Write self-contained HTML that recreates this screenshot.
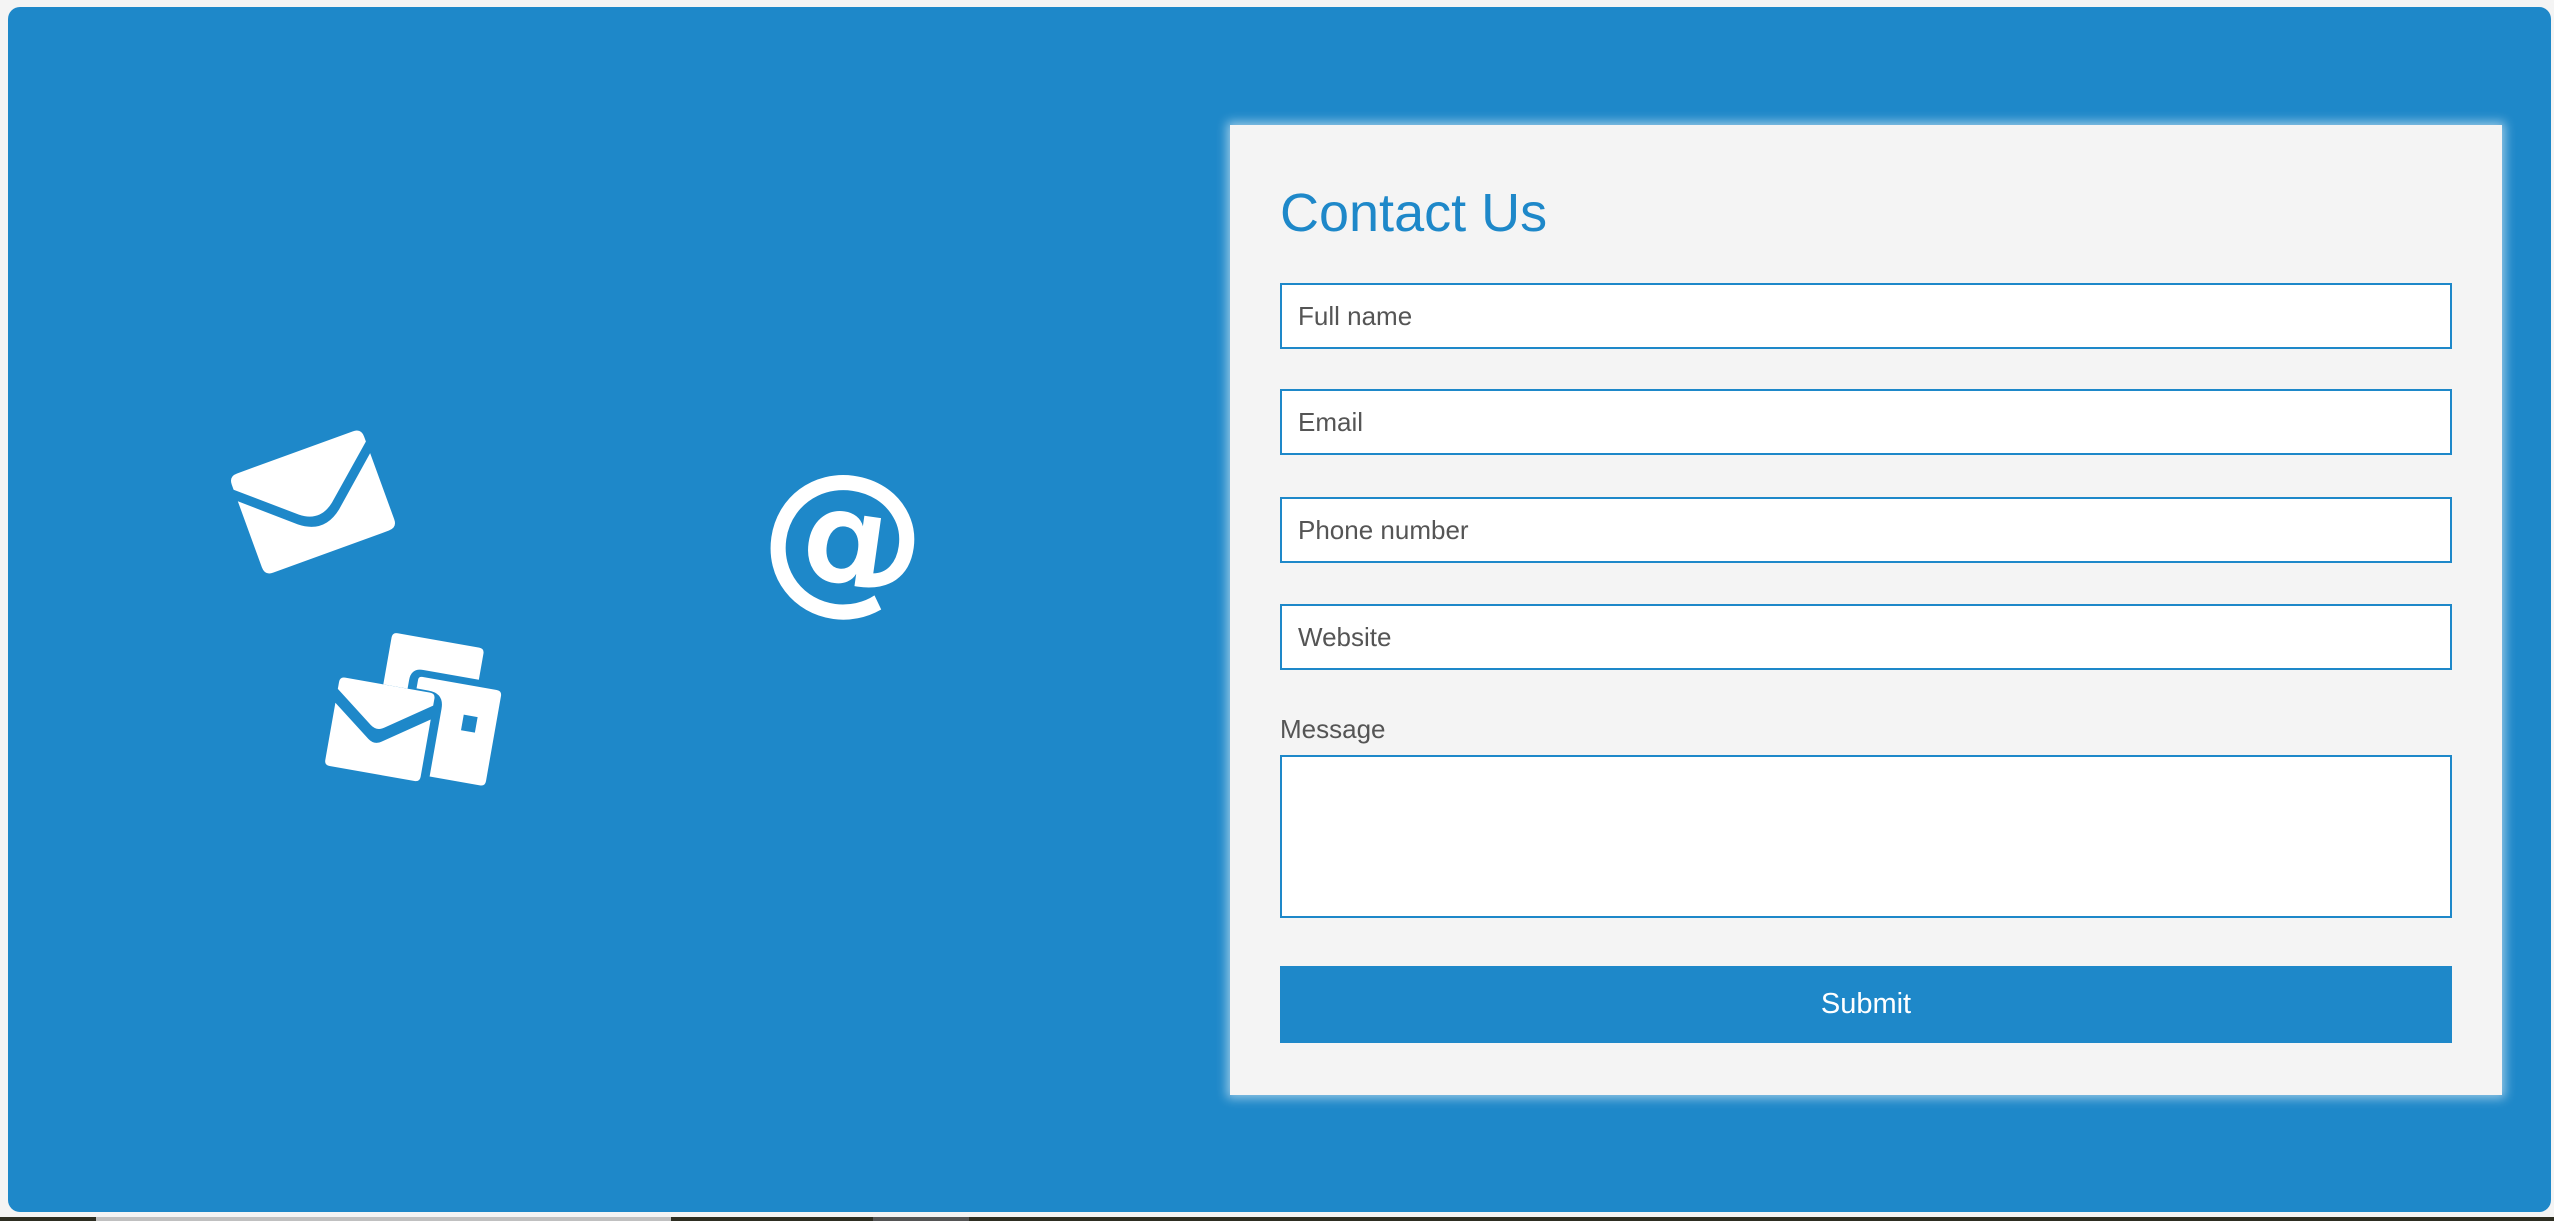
<!DOCTYPE html>
<html><head><meta charset="utf-8"><style>
html,body{margin:0;padding:0;width:2554px;height:1221px;overflow:hidden;background:#f4f4f4;font-family:"Liberation Sans",sans-serif;}
.wrap{position:absolute;left:8px;top:7px;width:2543px;height:1205px;background:#1e88c9;border-radius:12px;}
.strip{position:absolute;left:0;top:1217px;width:2554px;height:4px;background:#2e2e22;}
.strip i{position:absolute;top:0;height:4px;background:#c0c0c0;}
.card{position:absolute;left:1222px;top:118px;width:1272px;height:970px;background:#f4f4f4;box-shadow:0 0 10px 3px rgba(255,255,255,0.55);}
h1{position:absolute;left:50px;top:57px;margin:0;font-weight:normal;font-size:54px;color:#1e88c9;}
.in{position:absolute;left:50px;width:1168px;height:62px;background:#fff;border:2px solid #1e88c9;box-sizing:content-box;}
.in span{position:absolute;left:16px;top:16px;font-size:26px;color:#555;}
.lbl{position:absolute;left:50px;top:589px;font-size:26px;color:#555;}
.ta{position:absolute;left:50px;top:630px;width:1168px;height:159px;background:#fff;border:2px solid #1e88c9;}
.btn{position:absolute;left:50px;top:841px;width:1172px;height:77px;background:#1e88c9;color:#fff;font-size:29px;text-align:center;line-height:77px;}
</style></head><body>
<div class="wrap">
<svg style="position:absolute;left:0;top:0" width="1200" height="1205">
 <g fill="#fff" transform="translate(305,495) rotate(-20) scale(0.88)">
  <path d="M-80,-50 Q-80,-60 -70,-60 L70,-60 Q80,-60 80,-50 L80,-44 L20,8 Q0,24 -20,8 L-80,-44 Z"/>
  <path d="M-80,-30 L-25,18 Q0,38 25,18 L80,-30 L80,50 Q80,60 70,60 L-70,60 Q-80,60 -80,50 Z"/>
 </g>
 <g transform="translate(836,528) rotate(8)">
  <text x="0" y="56" font-family="DejaVu Sans" font-weight="bold" font-size="165" fill="#fff" text-anchor="middle">@</text>
 </g>
 <g fill="#fff" transform="translate(406,706) rotate(10) scale(0.88)">
  <path d="M-40,-80 Q-40,-86 -34,-86 L60,-86 Q66,-86 66,-80 L66,-50 L2,-50 Q-12,-50 -12,-36 L-12,-26 L-40,-26 Z"/>
  <path d="M-2,-38 Q-2,-42 2,-42 L88,-42 Q94,-42 94,-36 L94,62 Q94,68 88,68 L30,68 L30,-10 Q30,-28 12,-28 L-2,-28 Z"/>
  <rect x="56" y="-8" width="16" height="18" fill="#1e88c9"/>
  <path d="M-90,-20 Q-90,-26 -84,-26 L14,-26 Q20,-26 20,-20 L20,-12 L-30,22 Q-38,28 -46,22 L-90,-12 Z"/>
  <path d="M-90,4 L-46,38 Q-38,44 -30,38 L20,4 L20,70 Q20,76 14,76 L-84,76 Q-90,76 -90,70 Z"/>
 </g>
</svg>
<div class="card">
 <h1>Contact Us</h1>
 <div class="in" style="top:158px"><span>Full name</span></div>
 <div class="in" style="top:264px"><span>Email</span></div>
 <div class="in" style="top:372px"><span>Phone number</span></div>
 <div class="in" style="top:479px"><span>Website</span></div>
 <div class="lbl">Message</div>
 <div class="ta"></div>
 <div class="btn">Submit</div>
</div>
</div>
<div class="strip"><i style="left:96px;width:575px"></i><i style="left:873px;width:96px;background:#555"></i></div>
</body></html>
